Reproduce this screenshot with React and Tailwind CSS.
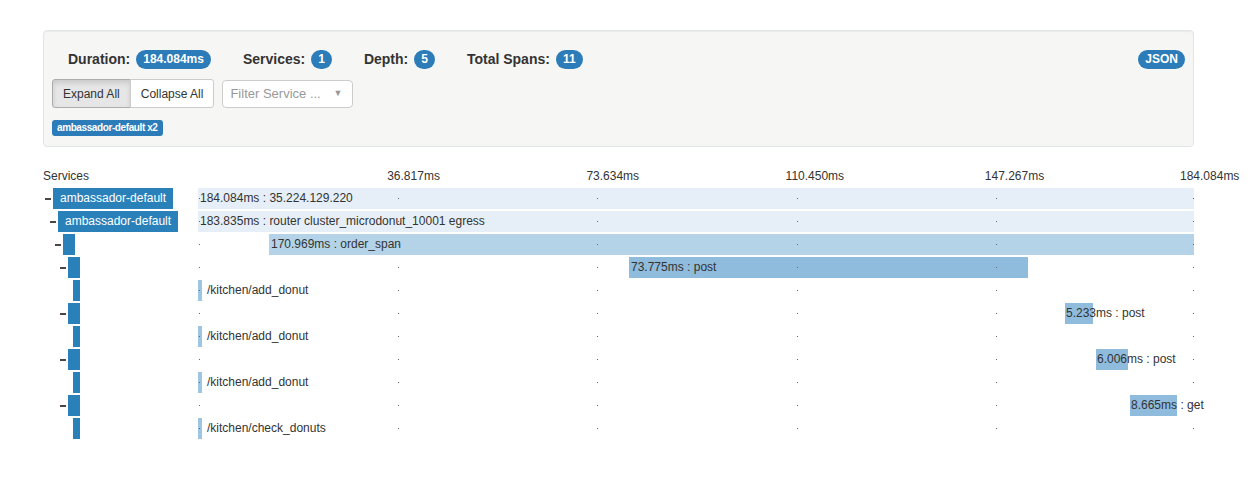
import React from 'react';

const TOTAL = 184.084;
const TRACK = 996;

const rows = [
  { level: 0, name: 'ambassador-default', dash: true, start: 0, dur: 184.084, label: '184.084ms : 35.224.129.220', tone: 'light', textAt: 2 },
  { level: 1, name: 'ambassador-default', dash: true, start: 0, dur: 184.084, label: '183.835ms : router cluster_microdonut_10001 egress', tone: 'light', textAt: 2 },
  { level: 2, name: '', dash: true, start: 13.115, dur: 170.969, label: '170.969ms : order_span', tone: 'mid', textAt: 2 },
  { level: 3, name: '', dash: true, start: 79.66, dur: 73.775, label: '73.775ms : post', tone: 'dark', textAt: 2 },
  { level: 4, name: '', dash: false, start: 0, dur: 0.74, label: '/kitchen/add_donut', tone: 'leaf', textAt: 9 },
  { level: 3, name: '', dash: true, start: 160.24, dur: 5.233, label: '5.233ms : post', tone: 'dark', textAt: 1 },
  { level: 4, name: '', dash: false, start: 0, dur: 0.74, label: '/kitchen/add_donut', tone: 'leaf', textAt: 9 },
  { level: 3, name: '', dash: true, start: 165.97, dur: 6.006, label: '6.006ms : post', tone: 'dark', textAt: 1 },
  { level: 4, name: '', dash: false, start: 0, dur: 0.74, label: '/kitchen/add_donut', tone: 'leaf', textAt: 9 },
  { level: 3, name: '', dash: true, start: 172.26, dur: 8.665, label: '8.665ms : get', tone: 'dark', textAt: 1 },
  { level: 4, name: '', dash: false, start: 0, dur: 0.74, label: '/kitchen/check_donuts', tone: 'leaf', textAt: 9 },
];

const ticks = ['36.817ms', '73.634ms', '110.450ms', '147.267ms', '184.084ms'];

const indent = {
  0: 'pl-[2px]',
  1: 'pl-[7px]',
  2: 'pl-[12px]',
  3: 'pl-[17px]',
  4: 'pl-[22px]',
};

const tones = {
  light: 'bg-[#e6eff7]',
  mid: 'bg-[#b4d3e8]',
  dark: 'bg-[#8fbbdc]',
  leaf: 'bg-[#9ec5e2]',
};

const px = (ms) => (ms / TOTAL) * TRACK;

function Badge({ children }) {
  return (
    <span className="ml-[6px] inline-block rounded-[10px] bg-[#2b7cb8] px-[7px] py-[3px] text-[12px] font-bold leading-[13px] text-white">
      {children}
    </span>
  );
}

function Stat({ label, value, first }) {
  return (
    <div className={first ? 'flex items-center' : 'ml-[32px] flex items-center'}>
      <span className="text-[14px] font-bold leading-[20px] text-[#333]">{label}</span>
      <Badge>{value}</Badge>
    </div>
  );
}

function ServiceCell({ row }) {
  return (
    <div className={'flex h-[21px] w-[155px] items-center ' + indent[row.level]}>
      {row.dash ? <div className="h-[2px] w-[6px] bg-[#4d4541]" /> : <div className="w-[6px]" />}
      {row.name ? (
        <div className="ml-[2px] h-[21px] whitespace-nowrap bg-[#2a81ba] px-[7px] text-[12px] leading-[21px] text-white">
          {row.name}
        </div>
      ) : (
        <div className={row.dash ? 'ml-[2px] h-[21px] w-[12px] bg-[#2a81ba]' : 'ml-[2px] h-[21px] w-[7px] bg-[#2a81ba]'} />
      )}
    </div>
  );
}

function TrackCell({ row }) {
  const left = px(row.start);
  const width = Math.max(px(row.dur), 3);
  return (
    <div className="relative h-[21px] w-[996px]">
      <div className={'absolute top-0 h-[21px] ' + tones[row.tone]} style={{ left, width }} />
      {[0, 1, 2, 3, 4, 5].map((k) => (
        <div
          key={k}
          className="absolute top-[10px] h-[1px] w-[1px] bg-[#666]"
          style={{ left: Math.min(k * 199.2 + 1, 995) }}
        />
      ))}
      <span
        className="absolute top-0 whitespace-nowrap text-[12px] leading-[21px] text-[#333]"
        style={{ left: left + row.textAt }}
      >
        {row.label}
      </span>
    </div>
  );
}

export default function App() {
  return (
    <div className="h-[497px] w-[1249px] overflow-hidden bg-white font-['Liberation_Sans',Arial,sans-serif] text-[#333]">
      <div className="ml-[43px] mt-[30px] h-[117px] w-[1151px] rounded-[4px] border border-[#e1e6ea] bg-[#f6f6f5] px-[8px] pt-[18px] shadow-[inset_0_1px_1px_rgba(0,0,0,0.05)]">
        <div className="flex items-center justify-between">
          <div className="flex items-center pl-[16px]">
            <Stat first label="Duration:" value="184.084ms" />
            <Stat label="Services:" value="1" />
            <Stat label="Depth:" value="5" />
            <Stat label="Total Spans:" value="11" />
          </div>
          <span className="inline-block rounded-[10px] bg-[#2b7cb8] px-[7px] py-[3px] text-[12px] font-bold leading-[13px] text-white">
            JSON
          </span>
        </div>

        <div className="mt-[10px] flex items-center">
          <div className="flex">
            <button className="h-[29px] rounded-l-[3px] border border-[#adadad] bg-[#e6e6e6] px-[10px] text-[12px] text-[#333] shadow-[inset_0_3px_5px_rgba(0,0,0,0.125)]">
              Expand All
            </button>
            <button className="-ml-px h-[29px] rounded-r-[3px] border border-[#ccc] bg-white px-[10px] text-[12px] text-[#333]">
              Collapse All
            </button>
          </div>
          <div className="ml-[8px] flex h-[28px] w-[131px] items-center justify-between rounded-[4px] border border-[#ccc] bg-white pl-[7px] pr-[10px]">
            <span className="text-[13px] text-[#999]">Filter Service ...</span>
            <span className="text-[9px] text-[#999]">▼</span>
          </div>
        </div>

        <div className="mt-[12px] flex">
          <span className="inline-block h-[16px] rounded-[3px] bg-[#2b7cb8] px-[5px] text-[10px] font-bold leading-[16px] tracking-[-0.4px] text-white">
            ambassador-default x2
          </span>
        </div>
      </div>

      <div className="ml-[43px] mt-[21px] w-[1151px]">
        <div className="flex h-[16px] items-center">
          <div className="w-[155px] text-[12px] leading-[16px]">Services</div>
          <div className="relative h-[16px] w-[996px]">
            {ticks.map((t, i) => (
              <span
                key={t}
                className="absolute top-0 whitespace-nowrap text-[12px] leading-[16px]"
                style={{ left: (i + 1) * 199.2 - (i === 4 ? 14 : 10) }}
              >
                {t}
              </span>
            ))}
          </div>
        </div>

        <div className="mt-[4px] flex flex-col gap-[2px]">
          {rows.map((row, i) => (
            <div key={i} className="flex h-[21px]">
              <ServiceCell row={row} />
              <TrackCell row={row} />
            </div>
          ))}
        </div>
      </div>
    </div>
  );
}
